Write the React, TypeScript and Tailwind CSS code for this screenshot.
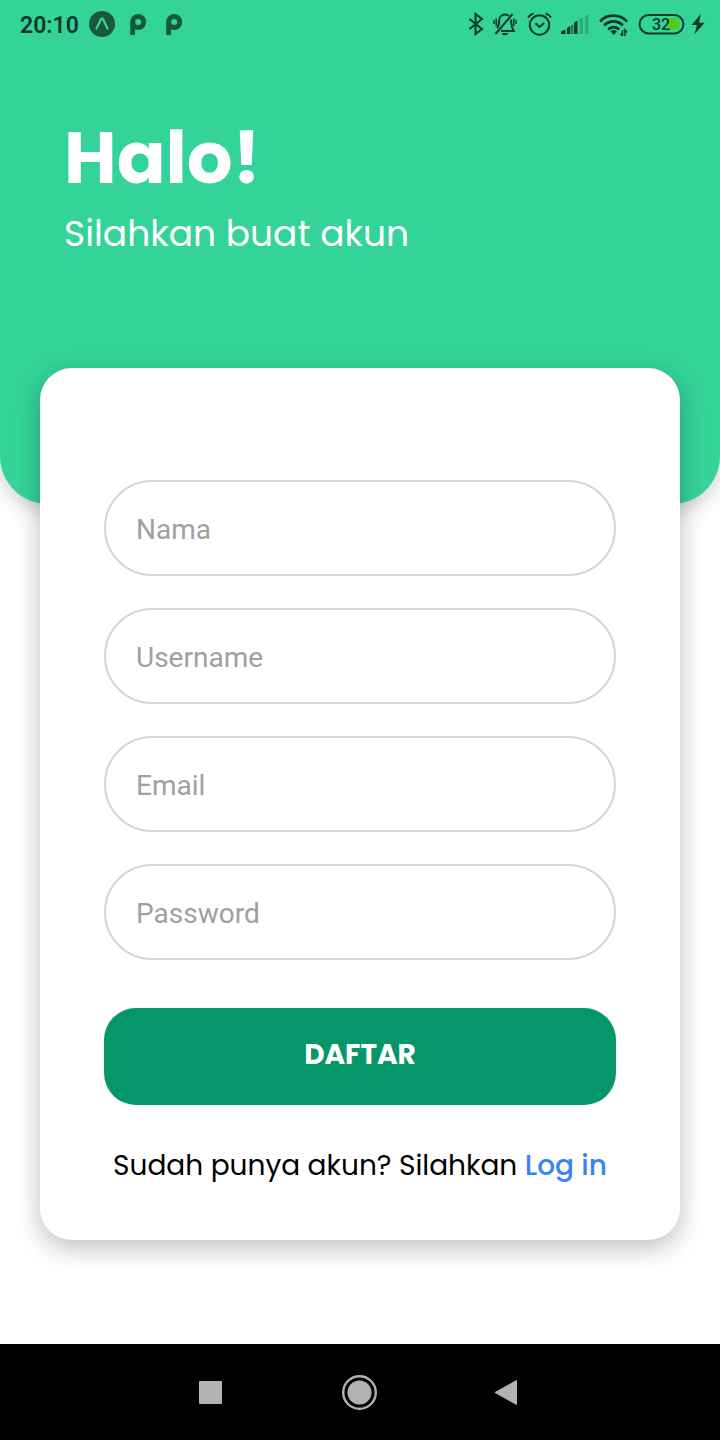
import React from "react";

type Field = { id: string; label: string; type: string; autoComplete: string };

const fields: Field[] = [
  { id: "name", label: "Nama", type: "text", autoComplete: "name" },
  { id: "username", label: "Username", type: "text", autoComplete: "username" },
  { id: "email", label: "Email", type: "email", autoComplete: "email" },
  { id: "password", label: "Password", type: "password", autoComplete: "new-password" },
];

function ParkingIcon() {
  return (
    <svg width="18" height="24" viewBox="0 0 18 24" className="text-[#17583f]" aria-hidden="true">
      <circle cx="9.200" cy="10" r="5.500" fill="none" stroke="currentColor" strokeWidth="5" />
      <path fill="currentColor" d="M1.200 10H6v13H1.200Z" />
    </svg>
  );
}

function BluetoothIcon() {
  return (
    <svg width="16" height="24" viewBox="0 0 16 24" fill="none" stroke="currentColor" strokeWidth="2" aria-hidden="true">
      <path d="M1.500 7 14 17 7.500 22V2L14 7 1.500 17" />
    </svg>
  );
}

function MutedBellIcon() {
  return (
    <svg width="24" height="24" viewBox="0 0 24 24" fill="none" stroke="currentColor" strokeWidth="2" aria-hidden="true">
      <path d="M4 16C6 14 6 12 6 9.500 6 5.500 8.500 2.500 12 2.500c1.700 0 3 .6 4 1.500M18 7.500c.4 5 0 7.500 2.700 11.500H8" />
      <path d="M2.500 22 19.500 2" />
      <path d="M9 21.500h6l-1.500 1.200h-3Z" fill="currentColor" strokeWidth="1" />
      <path d="M1 8v4M3.200 6.500v7.500M20.800 6.500v7.500M23 8v4" strokeWidth="1.500" />
    </svg>
  );
}

function AlarmIcon() {
  return (
    <svg width="26" height="24" viewBox="0 0 26 24" fill="none" stroke="currentColor" strokeWidth="2" aria-hidden="true">
      <circle cx="13.500" cy="13" r="9.700" />
      <path d="m9.500 11.300 4 3.700 4.500-4M2 5.500Q4 2.500 7.500 1.500M19.500 1.500Q23 2.500 25 5.500" />
    </svg>
  );
}

function SignalIcon() {
  return (
    <svg width="28" height="24" viewBox="0 0 28 24" fill="currentColor" aria-hidden="true">
      <path d="M0 22v-2.500l4.500-2V22ZM6 22v-6l3.300-2V22ZM13.200 22V10.500l3.300-2V22Z" />
      <path d="M10 22v-8.500l2.500-1.500V22Z" opacity=".55" />
      <g opacity=".25">
        <path d="M18.500 22V7l3.500-2v17ZM24 22V4l3.500-2v20Z" />
      </g>
    </svg>
  );
}

function WifiIcon() {
  return (
    <svg width="33" height="24" viewBox="0 0 33 24" fill="none" stroke="currentColor" aria-hidden="true">
      <path
        strokeWidth="2.700"
        d="M2 9.500C9 1.700 21.500 1.700 29 9.500M6.200 13.500c5-5.600 13.600-5.600 18.600 0M10.300 17.500c3-3.300 7.700-3.300 10.700 0"
      />
      <path fill="currentColor" stroke="none" d="M12.500 19.500q3.200-2.800 6.400 0L15.700 23Z" />
      <path strokeWidth="1.500" d="M24.500 18v6L22.500 21.500M27 24v-6l2 2.500" />
    </svg>
  );
}

function Battery() {
  return (
    <svg width="48" height="24" viewBox="0 0 48 24" role="img" aria-label="Baterai 32 persen">
      <path d="M31 6h6a5.800 5.800 0 0 1 0 12h-6Z" fill="#55c81e" />
      <rect x="2.500" y="3" width="44" height="18.500" rx="9.200" fill="none" stroke="currentColor" strokeWidth="2" />
      <text x="24" y="18" textAnchor="middle" className="fill-current font-[Roboto,sans-serif] text-[16px] font-medium">
        32
      </text>
    </svg>
  );
}

function BoltIcon() {
  return (
    <svg width="14" height="24" viewBox="0 0 14 24" fill="currentColor" aria-hidden="true">
      <path d="M10 2 .5 13H6l-2.500 9L13.700 10.700H8Z" />
    </svg>
  );
}

function StatusBar() {
  return (
    <div className="flex h-12 items-center justify-between pr-[15px] pl-5 text-[#10382a]">
      <div className="flex items-center">
        <span className="pt-[3px] font-[Roboto,sans-serif] text-[23px] leading-8 font-semibold">20:10</span>
        <svg width="26" height="26" viewBox="0 0 26 26" className="ml-[10px] text-[#17583f]" aria-hidden="true">
          <circle cx="13" cy="13" r="13" fill="currentColor" />
          <path
            d="M7.500 17.500 12.300 7.500h1.400L18.500 17.500"
            fill="none"
            stroke="#34d399"
            strokeWidth="2.200"
            strokeLinecap="round"
            strokeLinejoin="round"
          />
        </svg>
        <div className="ml-[14px] flex gap-[18px]">
          <ParkingIcon />
          <ParkingIcon />
        </div>
      </div>
      <div className="flex items-center gap-[9px]">
        <BluetoothIcon />
        <MutedBellIcon />
        <AlarmIcon />
        <SignalIcon />
        <div className="flex items-center gap-[6px]">
          <WifiIcon />
          <Battery />
          <BoltIcon />
        </div>
      </div>
    </div>
  );
}

function NavigationBar() {
  return (
    <nav className="flex h-24 items-center justify-center gap-[110px] bg-black text-[#b3b3b3]" aria-label="Navigasi sistem">
      <button type="button" aria-label="Aplikasi terbaru">
        <svg width="40" height="40" viewBox="0 0 40 40" aria-hidden="true">
          <rect x="9" y="9" width="23" height="23" rx="1" fill="currentColor" />
        </svg>
      </button>
      <button type="button" aria-label="Beranda">
        <svg width="40" height="40" viewBox="0 0 40 40" aria-hidden="true">
          <circle cx="19.500" cy="20.500" r="16.300" fill="none" stroke="currentColor" strokeWidth="2.400" />
          <circle cx="19.500" cy="20.500" r="12" fill="currentColor" />
        </svg>
      </button>
      <button type="button" aria-label="Kembali">
        <svg width="40" height="40" viewBox="0 0 40 40" aria-hidden="true">
          <path
            d="M5 20.500 26.500 8.500V32.500Z"
            fill="currentColor"
            stroke="currentColor"
            strokeWidth="1"
            strokeLinejoin="round"
          />
        </svg>
      </button>
    </nav>
  );
}

export default function App() {
  return (
    <div className="flex min-h-screen flex-col bg-white font-[Poppins,Inter,sans-serif]">
      <header className="rounded-b-[48px] bg-[#34d399] pb-[244px] shadow-[0_6px_20px_rgba(0,0,0,0.2)]">
        <StatusBar />
        <div className="px-16 pt-[70px] text-white">
          <h1 className="text-7xl leading-[80px] font-bold">Halo!</h1>
          <p className="mt-[10px] text-4xl leading-[52px]">Silahkan buat akun</p>
        </div>
      </header>

      <main className="-mt-[136px] flex-1 px-10 pb-[104px]">
        <form
          className="rounded-[32px] bg-white px-16 pt-28 pb-[53px] shadow-[0_8px_26px_rgba(0,0,0,0.26)]"
          onSubmit={(event: React.FormEvent) => event.preventDefault()}
        >
          <div className="flex flex-col gap-8">
            {fields.map((field) => (
              <input
                key={field.id}
                id={field.id}
                name={field.id}
                type={field.type}
                autoComplete={field.autoComplete}
                aria-label={field.label}
                placeholder={field.label}
                className="block h-24 w-full rounded-full border-2 border-[#d1d5db] bg-white px-[30px] pt-[2px] font-[Roboto,sans-serif] text-[28px] leading-[48px] text-gray-900 outline-none placeholder:text-[#a0a0a0] focus:border-emerald-500"
              />
            ))}
          </div>
          <button
            type="submit"
            className="mt-12 block h-[97px] w-full rounded-[32px] bg-[#059669] pb-[3px] text-[28px] leading-[42px] font-bold text-white"
          >
            DAFTAR
          </button>
          <p className="mt-10 text-center text-[28px] leading-[42px] whitespace-nowrap text-black">
            Sudah punya akun? Silahkan{" "}
            <a href="#login" className="font-medium text-[#3b82f6]">
              Log in
            </a>
          </p>
        </form>
      </main>

      <NavigationBar />
    </div>
  );
}
